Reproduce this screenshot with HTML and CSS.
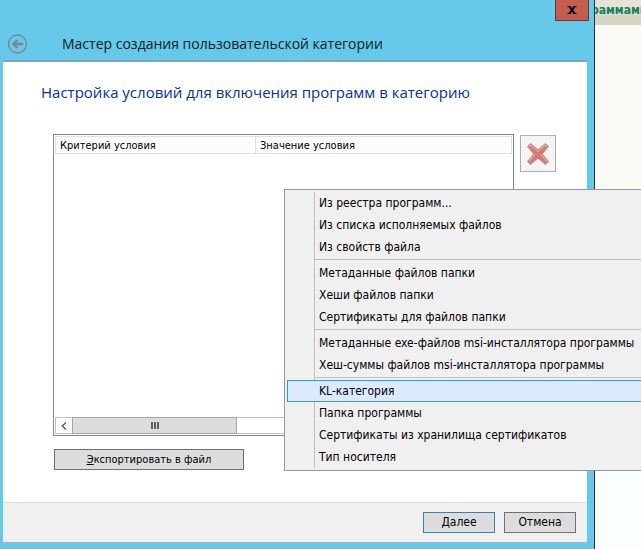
FILE: index.html
```html
<!DOCTYPE html>
<html lang="ru">
<head>
    <meta charset="UTF-8">
    <meta name="viewport" content="width=device-width, initial-scale=1.0">
    <title>Мастер создания пользовательской категории</title>
    <link rel="stylesheet" href="styles.css">
</head>
<body>
    <div class="desktop">
        <main class="wizard">
            <header class="titlebar">
                <button type="button" class="back" aria-label="Назад" disabled>
                    <svg width="20" height="20" viewBox="0 0 20 20" fill="none" stroke="#7c8587">
                        <circle cx="9.5" cy="10" r="9" stroke-width="1.3"/>
                        <path d="M15 10H6" stroke-width="2.4"/>
                        <path d="M9.5 6L5.3 10l4.2 4" stroke-width="2.4"/>
                    </svg>
                </button>
                <h1>Мастер создания пользовательской категории</h1>
                <button type="button" class="close" aria-label="Закрыть">
                    <svg width="10" height="8" viewBox="0 0 10 8" fill="none" stroke="#000">
                        <path d="M2.5 0.5L7.5 7.5M7.5 0.5L2.5 7.5" stroke-width="2"/>
                        <path d="M0.5 0.5h3M6.5 0.5h3M0.5 7.5h3M6.5 7.5h3" stroke-width="1"/>
                    </svg>
                </button>
            </header>

            <section class="page">
                <h2>Настройка условий для включения программ в категорию</h2>
                <div class="conditions">
                    <div class="list">
                        <table>
                            <thead>
                                <tr>
                                    <th class="criterion">Критерий условия</th>
                                    <th>Значение условия</th>
                                </tr>
                            </thead>
                        </table>
                        <div class="scrollbar">
                            <button type="button" class="scroll-left" aria-label="Прокрутить влево">
                                <svg width="6" height="8" viewBox="0 0 6 8" fill="none" stroke="#606060" stroke-width="1.5">
                                    <path d="M5 0.5L1.3 4L5 7.5"/>
                                </svg>
                            </button>
                            <div class="thumb">
                                <svg width="8" height="7" viewBox="0 0 8 7" fill="#606060">
                                    <path d="M0 0h2v7H0zM3 0h2v7H3zM6 0h2v7H6z"/>
                                </svg>
                            </div>
                        </div>
                    </div>
                    <button type="button" class="delete" aria-label="Удалить">
                        <svg width="24" height="24" viewBox="0 0 24 24" stroke-linejoin="round">
                            <path d="M4.5 1.5L12 8L19.5 1.5L22.5 4.5L16 12L22.5 19.5L19.5 22.5L12 16L4.5 22.5L1.5 19.5L8 12L1.5 4.5Z" fill="#d97777" stroke="#c08080" stroke-width="1"/>
                            <path d="M2.6 5L4.6 2.8L12 9.4L19.5 2.8L21.4 4.8M3 19.3L9.2 12.4M14.8 12.4L21 19.3" fill="none" stroke="#e8abab" stroke-width="1.1"/>
                        </svg>
                    </button>
                </div>
                <button type="button" class="btn export"><u>Э</u>кспортировать в файл</button>
            </section>

            <footer class="actions">
                <button type="button" class="btn primary"><u>Д</u>алее</button>
                <button type="button" class="btn">Отмена</button>
            </footer>
        </main>

        <aside class="console">
            <div class="console-title">раммами</div>
        </aside>

        <div class="menu" role="menu">
            <button type="button" role="menuitem">Из реестра программ...</button>
            <button type="button" role="menuitem">Из списка исполняемых файлов</button>
            <button type="button" role="menuitem">Из свойств файла</button>
            <hr>
            <button type="button" role="menuitem">Метаданные файлов папки</button>
            <button type="button" role="menuitem">Хеши файлов папки</button>
            <button type="button" role="menuitem">Сертификаты для файлов папки</button>
            <hr>
            <button type="button" role="menuitem">Метаданные exe-файлов msi-инсталлятора программы</button>
            <button type="button" role="menuitem">Хеш-суммы файлов msi-инсталлятора программы</button>
            <hr>
            <button type="button" role="menuitem" class="active">KL-категория</button>
            <button type="button" role="menuitem">Папка программы</button>
            <button type="button" role="menuitem">Сертификаты из хранилища сертификатов</button>
            <button type="button" role="menuitem">Тип носителя</button>
        </div>
    </div>
</body>
</html>
```
FILE: styles.css
```css
* {
    box-sizing: border-box;
}
body {
    margin: 0;
    font-family: "DejaVu Sans Condensed", "DejaVu Sans", sans-serif;
    font-size: 12px;
    color: #000;
}
button {
    margin: 0;
    padding: 0;
    font: inherit;
    color: inherit;
}
svg {
    display: block;
}
h1, h2 {
    font-family: "Open Sans", "Noto Sans", sans-serif;
    font-weight: normal;
    line-height: 22px;
}
.desktop {
    position: relative;
    display: flex;
    min-height: 100vh;
    overflow: hidden;
}

/* wizard window */
.wizard {
    flex: 1;
    display: flex;
    flex-direction: column;
    padding: 0 7px 6px 3px;
    background: #66c9e9;
    border-right: 1px solid #263238;
}
.titlebar {
    display: flex;
    align-items: flex-start;
    height: 60px;
}
.titlebar h1 {
    flex: 1;
    margin: 33px 0 0 34px;
    font-size: 14px;
    color: #0c1c20;
}
.back {
    margin: 34px 0 0 5px;
    border: 0;
    background: none;
}
.close {
    display: flex;
    align-items: center;
    justify-content: center;
    width: 34px;
    height: 21px;
    margin-right: -2px;
    border: 1px solid #653838;
    border-top: 0;
    background: #c45c50;
}
.page {
    flex: 1;
    display: flex;
    flex-direction: column;
    padding: 19px 31px 32px 50px;
    border-top: 2px solid #7fa3b8;
    background: #fff;
}
.page h2 {
    margin: 0 0 31px -12px;
    font-size: 15px;
    color: #003399;
}
.conditions {
    flex: 1;
    display: flex;
    align-items: flex-start;
    gap: 6px;
}

/* list of conditions */
.list {
    flex: 1;
    align-self: stretch;
    display: flex;
    flex-direction: column;
    justify-content: space-between;
    padding: 1px;
    border: 1px solid #828790;
}
.list table {
    width: 100%;
    table-layout: fixed;
    border-collapse: collapse;
    background: #fcfcfc;
}
.list th {
    height: 17px;
    padding: 0 4px;
    border: 1px solid #e0e0e0;
    font-size: 11px;
    font-weight: normal;
    line-height: 15px;
    text-align: left;
}
.list .criterion {
    width: 200px;
}
.scrollbar {
    display: flex;
    height: 17px;
    border: 1px solid #c0c0c0;
}
.scroll-left {
    display: flex;
    align-items: center;
    justify-content: center;
    width: 16px;
    border: 0;
    background: #fff;
}
.thumb {
    display: flex;
    align-items: center;
    justify-content: center;
    width: 165px;
    margin: -1px 0;
    border: 1px solid #a6a6a6;
    background: #dcdcdc;
}
.delete {
    display: flex;
    align-items: center;
    justify-content: center;
    width: 36px;
    height: 37px;
    margin-top: 1px;
    border: 1px solid #adadad;
    background: #f4f4f4;
}

/* push buttons */
.btn {
    width: 72px;
    height: 21px;
    border: 1px solid #707070;
    background: #ddd;
    line-height: 19px;
}
.btn.primary {
    border-color: #3c7fb1;
}
.btn.export {
    width: 190px;
    margin: 13px 0 0 1px;
    font-size: 11px;
}
.actions {
    display: flex;
    justify-content: flex-end;
    gap: 9px;
    padding: 9px 11px;
    border-top: 1px solid #dfdfdf;
    border-bottom: 1px solid #a3b4bb;
    background: #f0f0f0;
}

/* window behind the wizard */
.console {
    width: 46px;
    overflow: hidden;
    background: linear-gradient(#fbfaf5 85%, #fafeff 85%);
}
.console-title {
    height: 25px;
    background: linear-gradient(#e5e2d6 30%, #d8d4c3 70%);
    font-size: 12px;
    font-weight: bold;
    line-height: 20px;
    text-indent: -4px;
    white-space: nowrap;
    color: #14805e;
}

/* popup menu */
.menu {
    position: absolute;
    top: 189px;
    left: 284px;
    right: 0;
    padding: 2px 0 2px 2px;
    border: 1px solid #979797;
    border-right: 0;
    background: linear-gradient(#c0c0c0, #c0c0c0) 29px 2px / 1px calc(100% - 4px) no-repeat #f0f0f0;
}
.menu button {
    display: block;
    width: 100%;
    height: 22px;
    padding-left: 31px;
    border: 1px solid transparent;
    border-right: 0;
    background: none;
    line-height: 20px;
    text-align: left;
    white-space: nowrap;
}
.menu button.active {
    border-color: #26a0da;
    background: #dbeaff;
}
.menu hr {
    height: 1px;
    margin: 1px 0 2px 28px;
    border: 0;
    background: #c0c0c0;
}
```
